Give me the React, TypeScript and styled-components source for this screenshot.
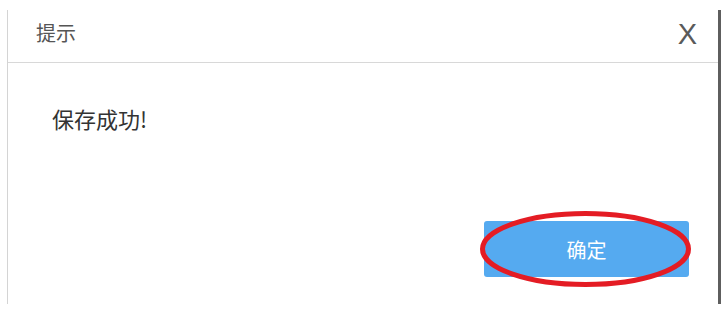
import React from "react";
import styled, { createGlobalStyle } from "styled-components";

const GlobalStyle = createGlobalStyle`
  html, body {
    margin: 0;
    padding: 0;
    background: #ffffff;
  }
  body {
    font-family: "Noto Sans CJK SC", "Noto Sans", sans-serif;
  }
`;

const Page = styled.div`
  width: 728px;
  height: 310px;
  padding: 10px 0 0 7px;
  box-sizing: border-box;
  overflow: hidden;
`;

const Dialog = styled.div`
  width: 714px;
  height: 294px;
  box-sizing: border-box;
  border-left: 1px solid #d4d4d4;
  border-right: 3px solid #5e5e5e;
  background: #ffffff;
  display: flex;
  flex-direction: column;
`;

const Header = styled.div`
  height: 53px;
  box-sizing: border-box;
  border-bottom: 1px solid #d8d8d8;
  display: flex;
  align-items: center;
  justify-content: space-between;
  padding: 0 21px 0 28px;
`;

const Title = styled.span`
  font-size: 20px;
  color: #555555;
  line-height: 1;
  margin-bottom: 6px;
`;

const Close = styled.span`
  font-family: "Liberation Sans", Arial, sans-serif;
  font-size: 29px;
  color: #5a5a5a;
  line-height: 1;
  margin-bottom: 4px;
`;

const Body = styled.div`
  flex: 1;
  display: flex;
  flex-direction: column;
  padding: 0 29px 27px 44px;
`;

const Message = styled.p`
  margin: 40px 0 0 0;
  font-size: 22px;
  color: #333333;
  line-height: 30px;
  flex: 1;
`;

const Footer = styled.div`
  display: flex;
  justify-content: flex-end;
`;

const ButtonWrap = styled.div`
  position: relative;
`;

const ConfirmButton = styled.button`
  width: 205px;
  height: 56px;
  border: none;
  border-radius: 3px;
  background: #55aaf0;
  color: #ffffff;
  font-family: "Noto Sans CJK SC", sans-serif;
  font-size: 20px;
  cursor: pointer;
  padding: 0;
`;

const Highlight = styled.svg`
  position: absolute;
  left: -4px;
  top: -10px;
  pointer-events: none;
  overflow: visible;
`;

export default function App() {
  return (
    <>
      <GlobalStyle />
      <Page>
        <Dialog>
          <Header>
            <Title>提示</Title>
            <Close>X</Close>
          </Header>
          <Body>
            <Message>保存成功!</Message>
            <Footer>
              <ButtonWrap>
                <ConfirmButton>确定</ConfirmButton>
                <Highlight width="211" height="76" viewBox="0 0 211 76">
                  <ellipse
                    cx="105.5"
                    cy="38"
                    rx="103"
                    ry="35.5"
                    fill="none"
                    stroke="#e41c24"
                    strokeWidth="5"
                  />
                </Highlight>
              </ButtonWrap>
            </Footer>
          </Body>
        </Dialog>
      </Page>
    </>
  );
}
